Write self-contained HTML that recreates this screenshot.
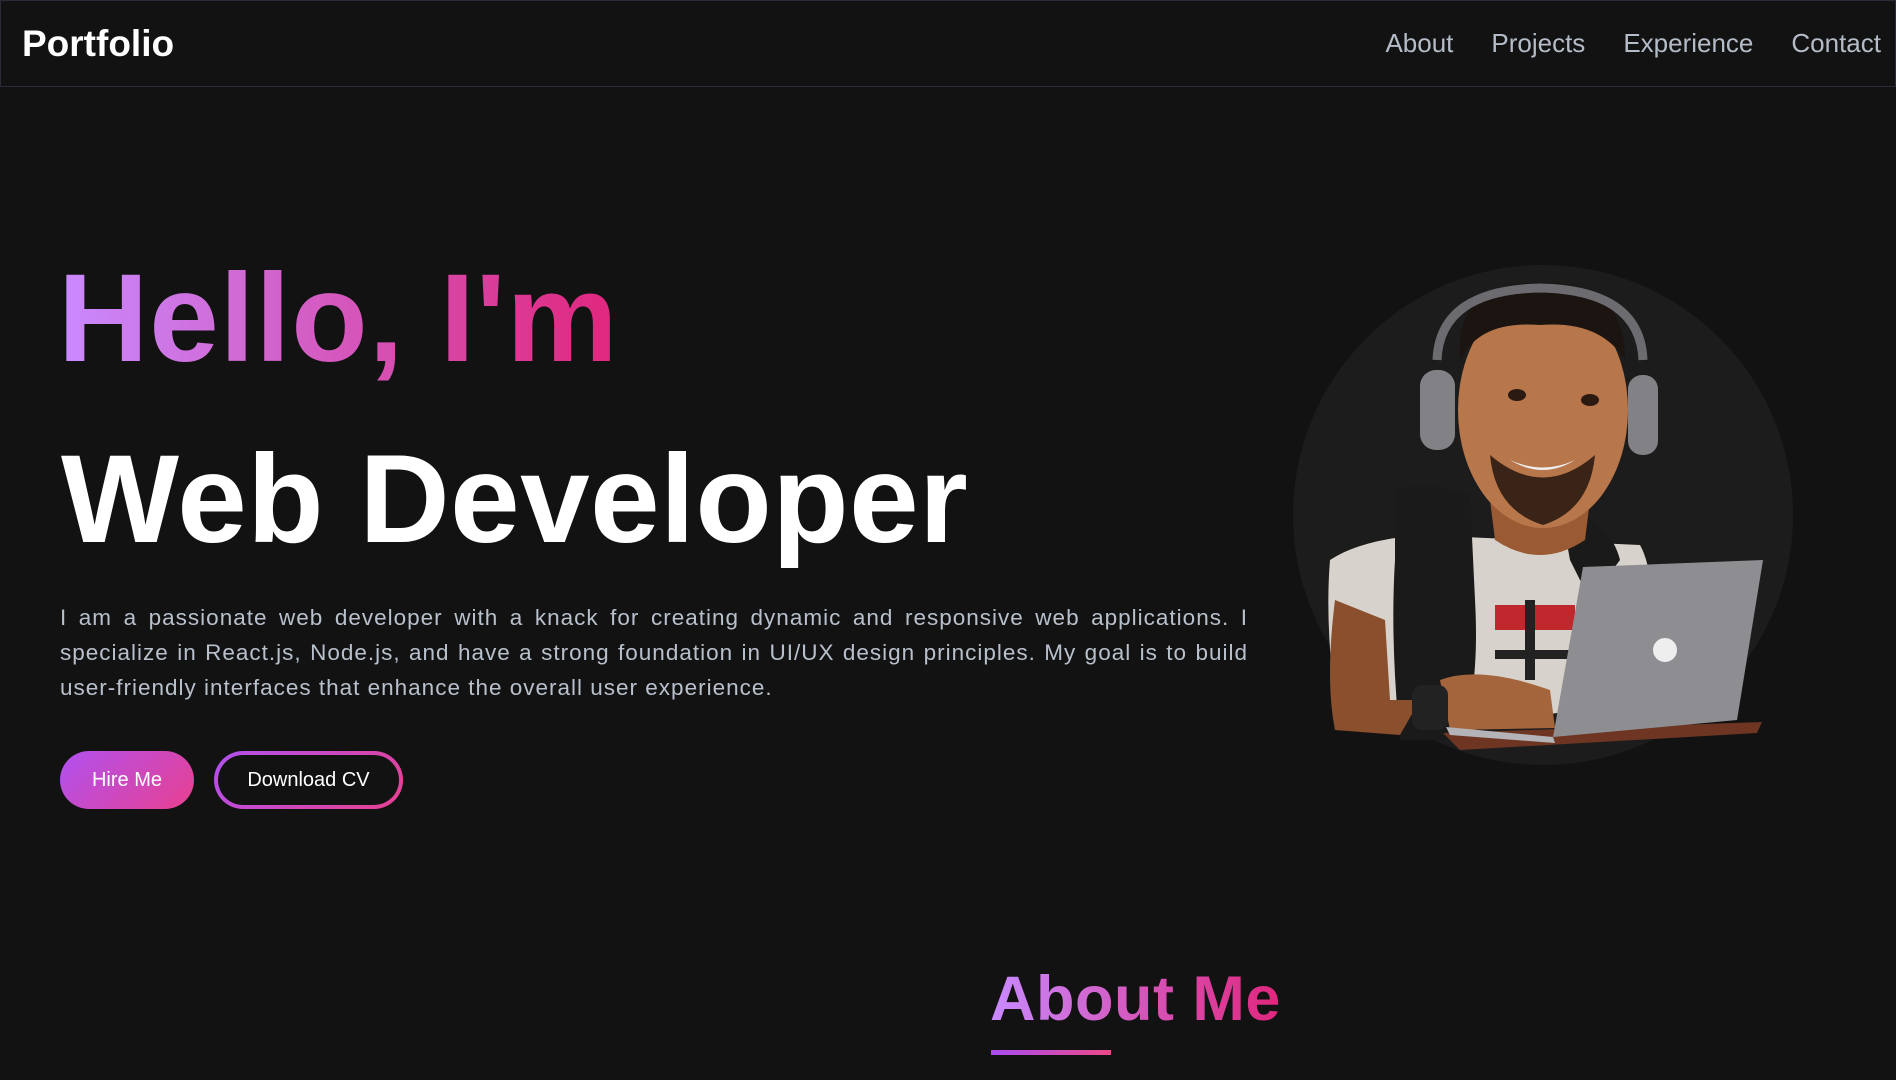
<!DOCTYPE html>
<html><head><meta charset="utf-8"><style>
*{margin:0;padding:0;box-sizing:border-box}
html,body{width:1896px;height:1080px;overflow:hidden;background:#121212;font-family:"Liberation Sans",sans-serif}
.nav{position:absolute;left:0;top:0;width:1896px;height:87px;border:1px solid #2c2c38;background:#121212}
.logo{position:absolute;left:21px;top:22px;font-size:37px;font-weight:bold;color:#fff}
.links{position:absolute;right:14px;top:27px;font-size:26px;color:#b4bcc8;white-space:nowrap}
.links span{margin-left:38px}
.grad{background:linear-gradient(90deg,#c98aff,#e0267c);-webkit-background-clip:text;background-clip:text;color:transparent}
.h1{position:absolute;left:58px;top:256px;font-size:125px;font-weight:bold;letter-spacing:1px;line-height:1;white-space:nowrap}
.h2{position:absolute;left:61px;top:437px;font-size:125px;font-weight:bold;color:#fff;letter-spacing:0.5px;line-height:1;white-space:nowrap}
.p{position:absolute;left:60px;top:600px;width:1188px;font-size:22.5px;letter-spacing:1px;line-height:35px;color:#b8c0cc;text-align:justify}
.b1{position:absolute;left:60px;top:751px;width:134px;height:58px;border-radius:29px;background:linear-gradient(135deg,#b051f0,#e8408f);color:#fff;font-size:20px;text-align:center;line-height:58px}
.b2{position:absolute;left:214px;top:751px;width:189px;height:58px;border-radius:29px;background:linear-gradient(135deg,#b051f0,#e8408f);padding:4px}
.b2 div{width:100%;height:100%;border-radius:25px;background:#121212;color:#fff;font-size:20px;text-align:center;line-height:50px}
.about{position:absolute;left:990px;top:968px;font-size:63px;font-weight:bold;white-space:nowrap;line-height:1;letter-spacing:0.5px}
.ul{position:absolute;left:991px;top:1050px;width:120px;height:5px;background:linear-gradient(90deg,#a84cf0,#ec4a8a)}
</style></head><body>
<div class="nav"><div class="logo">Portfolio</div><div class="links"><span>About</span><span>Projects</span><span>Experience</span><span>Contact</span></div></div>
<div class="h1 grad">Hello, I'm</div>
<div class="h2">Web Developer</div>
<div class="p">I am a passionate web developer with a knack for creating dynamic and responsive web applications. I specialize in React.js, Node.js, and have a strong foundation in UI/UX design principles. My goal is to build user-friendly interfaces that enhance the overall user experience.</div>
<div class="b1">Hire Me</div>
<div class="b2"><div>Download CV</div></div>
<svg style="position:absolute;left:0;top:0" width="1896" height="1080">
<circle cx="1543" cy="515" r="250" fill="#1c1c1c"/>
<path d="M1330 560 Q1360 540 1420 535 L1640 545 Q1660 580 1650 700 L1400 735 L1335 700 Q1325 620 1330 560Z" fill="#d8d2cc"/>
<path d="M1395 490 Q1430 480 1470 495 L1475 600 Q1480 690 1460 740 L1400 740 Q1390 640 1395 560Z" fill="#1a1a1a"/>
<path d="M1560 505 Q1610 520 1620 560 L1590 600 L1570 560Z" fill="#1a1a1a"/>
<rect x="1495" y="605" width="80" height="25" fill="#c0282e"/>
<rect x="1525" y="600" width="10" height="80" fill="#222"/>
<rect x="1495" y="650" width="80" height="9" fill="#222"/>
<path d="M1335 600 Q1325 680 1335 730 L1400 735 L1420 700 L1390 700 L1385 620Z" fill="#8a4f2c"/>
<path d="M1440 680 Q1480 665 1550 690 L1555 728 L1450 730Z" fill="#a4653c"/>
<rect x="1412" y="685" width="36" height="45" rx="10" fill="#222"/>
<path d="M1490 500 L1590 500 L1585 540 Q1540 570 1495 540Z" fill="#9a5a34"/>
<ellipse cx="1543" cy="410" rx="85" ry="118" fill="#b8774a"/>
<path d="M1460 360 Q1455 280 1540 283 Q1625 280 1625 360 Q1600 320 1540 325 Q1480 320 1460 360Z" fill="#1b1410"/>
<path d="M1490 455 Q1543 500 1595 455 Q1590 510 1543 525 Q1495 510 1490 455Z" fill="#3a2418"/>
<path d="M1510 460 Q1543 480 1575 460 Q1543 475 1510 460Z" fill="#eee"/>
<ellipse cx="1517" cy="395" rx="9" ry="6" fill="#2a1a12"/>
<ellipse cx="1590" cy="400" rx="9" ry="6" fill="#2a1a12"/>
<path d="M1437 360 Q1440 290 1540 288 Q1640 290 1643 360" fill="none" stroke="#6c6c70" stroke-width="9"/>
<rect x="1420" y="370" width="35" height="80" rx="16" fill="#828286"/>
<rect x="1628" y="375" width="30" height="80" rx="14" fill="#828286"/>
<path d="M1443 733 L1762 722 L1757 733 L1460 750Z" fill="#6e3622"/>
<path d="M1583 567 L1763 560 L1737 720 L1553 737Z" fill="#8e8e92"/>
<path d="M1446 727 L1553 737 L1555 743 L1450 735Z" fill="#b4b4b8"/>
<circle cx="1665" cy="650" r="12" fill="#eee"/>
</svg>
<div class="about grad">About Me</div>
<div class="ul"></div>
</body></html>
